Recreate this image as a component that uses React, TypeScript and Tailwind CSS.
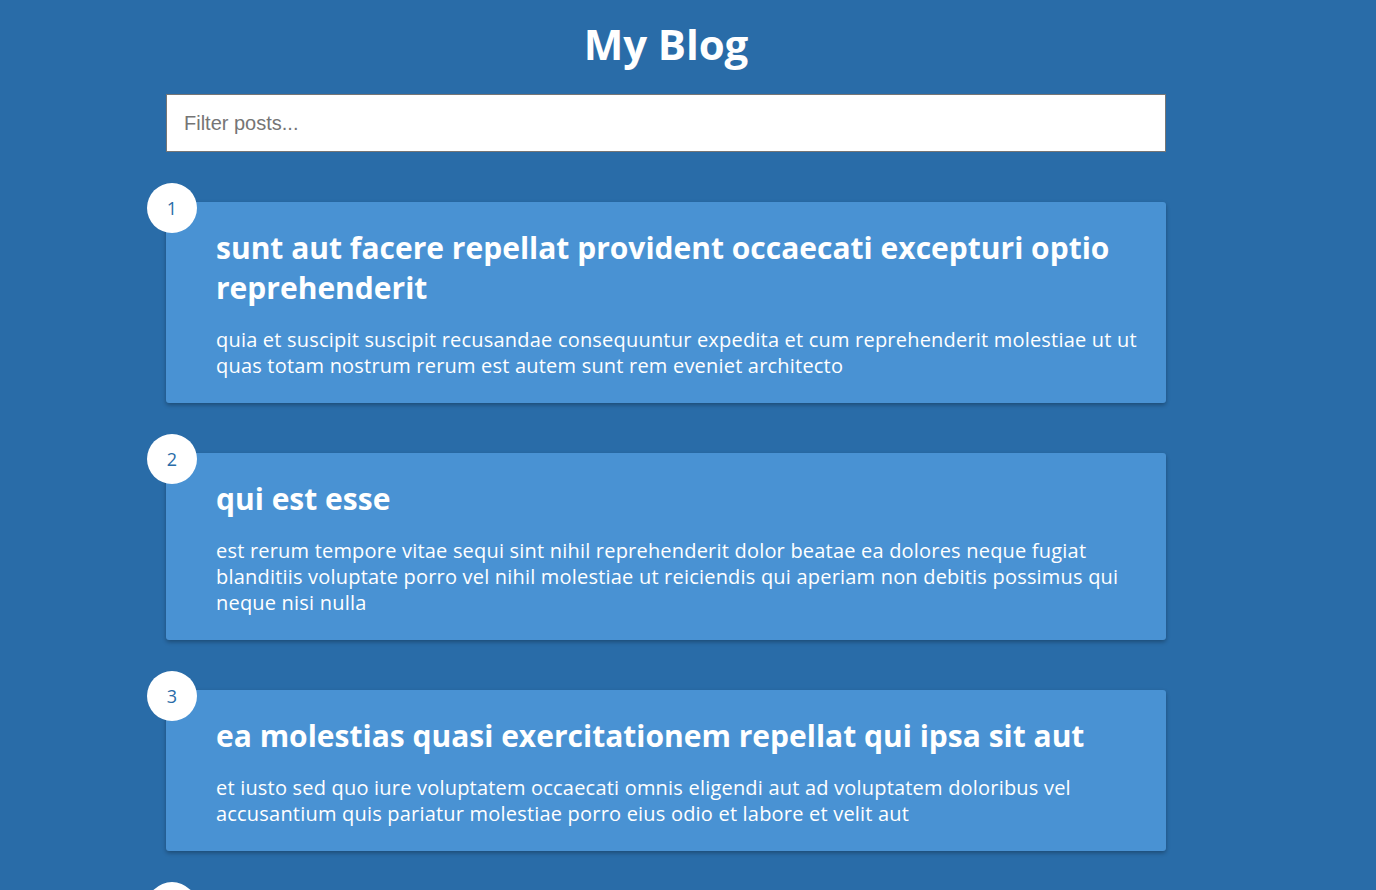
import { useState } from "react"

interface Post {
  id: number
  title: string
  body: string
}

const posts: Post[] = [
  {
    id: 1,
    title: "sunt aut facere repellat provident occaecati excepturi optio reprehenderit",
    body: "quia et suscipit suscipit recusandae consequuntur expedita et cum reprehenderit molestiae ut ut quas totam nostrum rerum est autem sunt rem eveniet architecto",
  },
  {
    id: 2,
    title: "qui est esse",
    body: "est rerum tempore vitae sequi sint nihil reprehenderit dolor beatae ea dolores neque fugiat blanditiis voluptate porro vel nihil molestiae ut reiciendis qui aperiam non debitis possimus qui neque nisi nulla",
  },
  {
    id: 3,
    title: "ea molestias quasi exercitationem repellat qui ipsa sit aut",
    body: "et iusto sed quo iure voluptatem occaecati omnis eligendi aut ad voluptatem doloribus vel accusantium quis pariatur molestiae porro eius odio et labore et velit aut",
  },
  {
    id: 4,
    title: "eum et est occaecati",
    body: "ullam et saepe reiciendis voluptatem adipisci sit amet autem assumenda provident rerum culpa quis hic commodi nesciunt rem tenetur doloremque ipsam iure quis sunt voluptatem rerum illo velit",
  },
]

export default function App() {
  const [filter, setFilter] = useState("")

  const visible = posts.filter(
    (p) => p.title.includes(filter.toLowerCase()) || p.body.includes(filter.toLowerCase())
  )

  return (
    <div className="min-h-screen bg-[#296ca8] text-white font-['Open_Sans',sans-serif] pb-[100px]">
      <div className="ml-[166px] w-[1000px] flex flex-col">
        <h1 className="text-center text-[42px] font-bold leading-[58px] pt-[15px] tracking-[-0.1px]">My Blog</h1>

        <input
          type="text"
          value={filter}
          onChange={(e) => setFilter(e.target.value)}
          placeholder="Filter posts..."
          className="mt-[21px] h-[58px] w-full bg-white border border-[#767676] px-[17px] text-[20px] text-black placeholder:text-[#757575] font-['Liberation_Sans',Arial,sans-serif] outline-none"
        />

        <div className="mt-[50px] flex flex-col gap-[50px]">
          {visible.map((post) => (
            <div
              key={post.id}
              className="relative flex bg-[#4992d3] rounded-[3px] shadow-[0_2px_4px_rgba(0,0,0,0.3)] pl-[50px] pr-[20px] pt-[26px] pb-[24px]"
            >
              <div className="absolute -top-[19px] -left-[19px] w-[50px] h-[50px] rounded-full bg-white text-[#296ca8] flex items-center justify-center text-[18px]">
                {post.id}
              </div>
              <div>
                <h2 className="m-0 text-[30px] font-bold leading-[40px]">{post.title}</h2>
                <p className="mt-[19px] text-[20px] leading-[26px] tracking-[0.2px]">{post.body}</p>
              </div>
            </div>
          ))}
        </div>
      </div>
    </div>
  )
}
